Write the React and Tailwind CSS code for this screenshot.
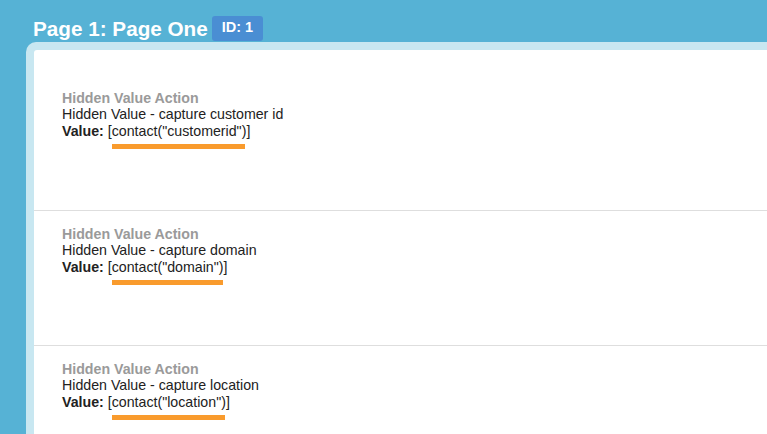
import React from 'react';

const actions = [
  { label: 'Hidden Value - capture customer id', value: 'customerid' },
  { label: 'Hidden Value - capture domain', value: 'domain' },
  { label: 'Hidden Value - capture location', value: 'location' },
];

const ActionRow = ({ action, first }) => (
  <div className={`px-[28px] border-b border-[#dedede] ${first ? 'pt-[40px] h-[161px]' : 'pt-[15px] h-[135px]'}`}>
    <div className="text-[14.2px] leading-[16px] font-bold text-[#9a9a9a]">Hidden Value Action</div>
    <div className="text-[14.2px] leading-[17px] text-[#222]">{action.label}</div>
    <div className="text-[14.2px] leading-[17px] text-[#222]">
      <span className="font-bold">Value:</span>{' '}
      [<span className="relative inline-block">
        contact("{action.value}")
        {/* orange highlight mark */}
        <span className="absolute left-0 right-[1px] top-[21px] h-[5px] bg-[#f99b2d]" />
      </span>]
    </div>
  </div>
);

export default function App() {
  return (
    <div className="w-[767px] h-[434px] overflow-hidden bg-[#56b2d5] font-['Liberation_Sans',Arial,sans-serif]">
      {/* page header */}
      <div className="flex items-center gap-[4px] pl-[33px] pt-[14px] h-[42px]">
        <h1 className="text-[20.7px] leading-[25px] font-bold text-white">Page 1: Page One</h1>
        <span className="h-[25px] px-[10px] flex items-center rounded-[3px] bg-[#4a8ed3] text-white text-[14.5px] font-bold">ID: 1</span>
      </div>

      {/* page body */}
      <div className="ml-[26px] pt-[8px] pl-[8px] bg-[#c8e7f1] rounded-tl-[10px] h-[392px]">
        <div className="bg-white rounded-tl-[3px] h-full">
          {actions.map((a, i) => (
            <ActionRow key={a.value} action={a} first={i === 0} />
          ))}
        </div>
      </div>
    </div>
  );
}
